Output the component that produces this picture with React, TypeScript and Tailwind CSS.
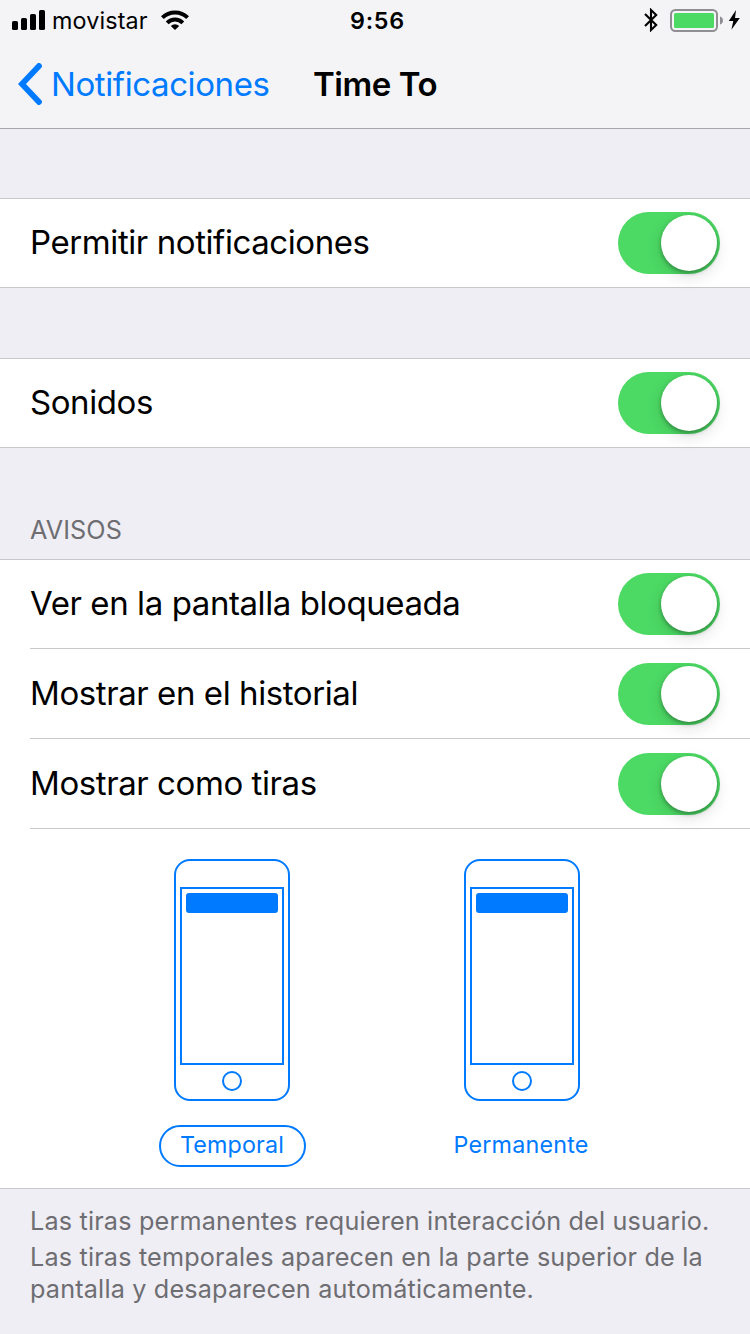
import React from "react";

function Toggle() {
  return (
    <div className="flex h-[62px] w-[102px] shrink-0 items-start justify-end rounded-full bg-[#4cd964] pt-[3px] pr-[3px]">
      <div className="size-14 rounded-full bg-white shadow-[0_2px_4px_rgba(0,0,0,0.32),0_6px_16px_rgba(0,0,0,0.12)]" />
    </div>
  );
}

function Row({ label, tall = false }: { label: string; tall?: boolean }) {
  return (
    <div className={`flex items-center justify-between px-[30px] ${tall ? "h-[89px]" : "h-[88px]"}`}>
      <span className="pb-0.5 text-[33px] leading-[40px] whitespace-nowrap text-black tracking-[-0.42px]">{label}</span>
      <Toggle />
    </div>
  );
}

function Separator() {
  return <div className="ml-[30px] h-px bg-[#c8c7cc]" />;
}

function Phone() {
  return (
    <svg width="116" height="242" viewBox="0 0 116 242" fill="none" stroke="#007aff" strokeWidth="2">
      <rect x="1" y="1" width="114" height="240" rx="15" />
      <rect x="7" y="29" width="102" height="176" />
      <rect x="12" y="34" width="92" height="20" rx="3" fill="#007aff" stroke="none" />
      <circle cx="58" cy="222" r="9" />
    </svg>
  );
}

function StatusBar() {
  return (
    <div className="grid h-10 grid-cols-3 items-center pr-[10px] pl-3 text-[23.3px] leading-[38px] text-black">
      <div className="flex items-center">
        <svg width="33" height="20" viewBox="0 0 33 20">
          <rect x="0" y="11" width="6" height="9" rx="1.6" />
          <rect x="9" y="8" width="6" height="12" rx="1.6" />
          <rect x="18" y="4" width="6" height="16" rx="1.6" />
          <rect x="27" y="0" width="6" height="20" rx="1.6" />
        </svg>
        <span className="ml-[7px] w-[109px] pt-0.5 whitespace-nowrap tracking-[0.15px]">movistar</span>
        <svg width="28" height="20" viewBox="0 0 28 20" fill="none" stroke="#000" strokeWidth="4">
          <path d="M1.4 7.6 A18 18 0 0 1 26.6 7.6" />
          <path d="M6.2 12.8 A11 11 0 0 1 21.8 12.8" />
          <path d="M14 20 L9.8 15.9 A6 6 0 0 1 18.2 15.9 Z" fill="#000" stroke="none" />
        </svg>
      </div>
      <div className="pt-0.5 pl-[3px] text-center font-semibold tracking-[0.8px]">9:56</div>
      <div className="flex items-center justify-end">
        <svg width="14" height="24" viewBox="0 0 14 24" fill="none" stroke="#000" strokeWidth="2.1">
          <path d="M1 6 L12.2 17 L7 22 V2 L12.2 7 L1 18" />
        </svg>
        <svg className="ml-3" width="54" height="24" viewBox="0 0 54 24">
          <rect x="1" y="2" width="46" height="21" rx="4.5" fill="none" stroke="#8e8e93" strokeWidth="2" />
          <rect x="4" y="5" width="40" height="15" rx="1.5" fill="#4cd964" />
          <path d="M50 8.5 A4.2 4.2 0 0 1 50 16.5 Z" fill="#8e8e93" />
        </svg>
        <svg className="ml-1" width="12" height="20" viewBox="0 0 12 20">
          <path d="M8 0 L0.8 11 H5.3 L3.4 19.8 L11.8 8 H7 Z" />
        </svg>
      </div>
    </div>
  );
}

export default function App() {
  return (
    <div className="flex h-[1334px] w-[750px] flex-col overflow-hidden bg-[#efeef4] font-['Inter',sans-serif]">
      <header className="h-[129px] border-b border-[#a7a7ab] bg-[#f4f4f7]">
        <StatusBar />
        <div className="flex h-[88px] items-center pl-[17px] text-[33px] leading-[40px]">
          <svg width="25" height="42" viewBox="0 0 25 42" fill="none" stroke="#007aff" strokeWidth="5.8" strokeLinecap="round" strokeLinejoin="miter">
            <path d="M22 3 L5 21 L22 39" />
          </svg>
          <span className="ml-[9px] w-[262px] whitespace-nowrap text-[#007aff] tracking-[-0.4px]">Notificaciones</span>
          <h1 className="font-semibold whitespace-nowrap text-black tracking-[-0.45px]">Time To</h1>
        </div>
      </header>
      <section className="mt-[69px] border-y border-[#c8c7cc] bg-white">
        <Row label="Permitir notificaciones" />
      </section>
      <section className="mt-[70px] border-y border-[#c8c7cc] bg-white">
        <Row label="Sonidos" />
      </section>
      <h2 className="mt-[66px] mb-[13px] h-8 pl-[30px] text-[25.2px] leading-[32px] text-[#6d6d72] tracking-[0.1px]">AVISOS</h2>
      <section className="border-y border-[#c8c7cc] bg-white">
        <Row label="Ver en la pantalla bloqueada" />
        <Separator />
        <Row label="Mostrar en el historial" tall />
        <Separator />
        <Row label="Mostrar como tiras" tall />
        <Separator />
        <div className="flex h-[359px] justify-center gap-[142px] pt-[30px] pl-1 text-[23.3px] leading-[36px] text-[#007aff]">
          <div className="flex w-[148px] flex-col items-center">
            <Phone />
            <div className="mt-6 flex h-[42px] w-[147px] items-center justify-center rounded-full border-2 border-[#007aff] pb-0.5 tracking-[0.15px]">Temporal</div>
          </div>
          <div className="flex w-[148px] flex-col items-center">
            <Phone />
            <div className="mt-6 flex h-[42px] items-center pr-0.5 pb-0.5 tracking-[0.2px]">Permanente</div>
          </div>
        </div>
      </section>
      <footer className="pt-4 pl-[30px] text-[25.2px] leading-[32px] whitespace-nowrap text-[#6d6d72] tracking-[0.18px]">
        <p>Las tiras permanentes requieren interacción del usuario.</p>
        <p className="mt-1">Las tiras temporales aparecen en la parte superior de la</p>
        <p>pantalla y desaparecen automáticamente.</p>
      </footer>
    </div>
  );
}
